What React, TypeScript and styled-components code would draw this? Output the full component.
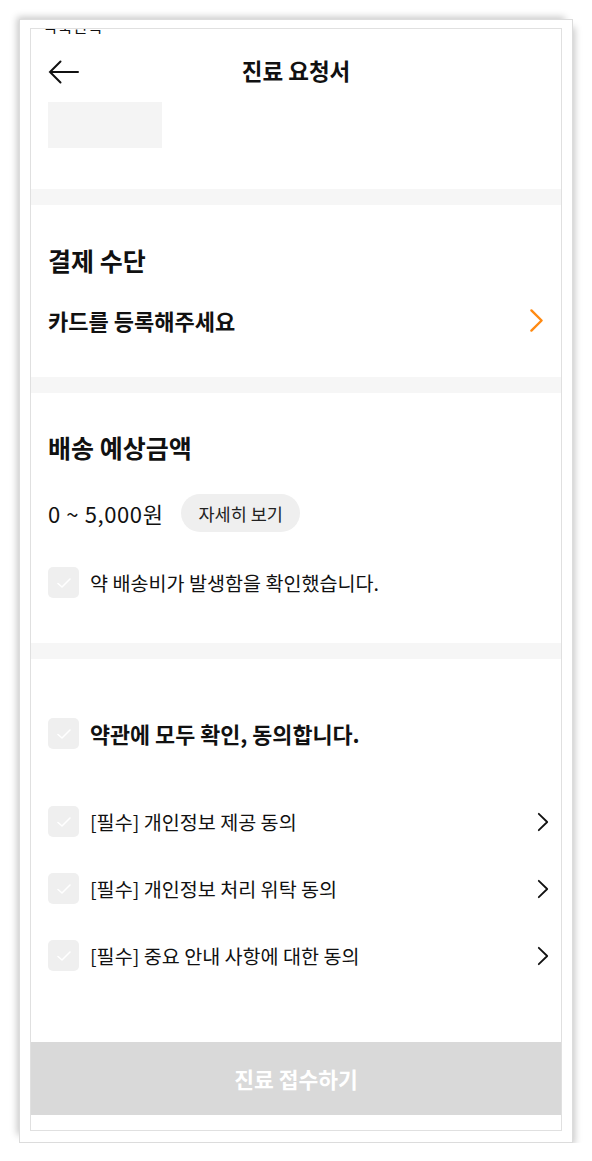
import React from 'react';
import styled, { createGlobalStyle } from 'styled-components';

const GlobalStyle = createGlobalStyle`
	body {
		margin: 0;
		background: #fff;
		font-family: 'Noto Sans CJK KR', 'Noto Sans', sans-serif;
		color: #111;
	}
`;

const Page = styled.div`
	padding: 19px 0 0 19px;
`;

const Frame = styled.div`
	width: 554px;
	height: 1124px;
	box-sizing: border-box;
	padding: 8px 10px 11px;
	background: #fff;
	border: 1px solid #dcdcdc;
	box-shadow: -5px -5px 7px -3px rgba(0, 0, 0, 0.22), 5px 5px 7px -3px rgba(0, 0, 0, 0.22);
`;

const Screen = styled.div`
	height: 1103px;
	box-sizing: border-box;
	border: 1px solid #e0e0e0;
	overflow: hidden;
	display: flex;
	flex-direction: column;
`;

const StatusClip = styled.div`
	height: 5px;
	overflow: hidden;
	padding-left: 12px;
	span {
		display: block;
		font-size: 16px;
		line-height: 16px;
		transform: translateY(-11px);
	}
`;

const TopSection = styled.section`
	padding: 0 17px 41px;
`;

const Header = styled.header`
	display: grid;
	grid-template-columns: 31px 1fr 31px;
	align-items: center;
	height: 24px;
	margin-top: 26px;
	h1 {
		margin: 0;
		padding-bottom: 4px;
		text-align: center;
		font-size: 22.5px;
		font-weight: 700;
		line-height: 20px;
	}
`;

const Placeholder = styled.div`
	width: 114px;
	height: 46px;
	margin-top: 18px;
	background: #f4f4f4;
`;

const Divider = styled.div`
	height: 16px;
	flex-shrink: 0;
	background: #f6f6f6;
`;

const Section = styled.section<{ $top: number; $bottom: number; $right?: number }>`
	padding: ${({ $top }) => $top}px ${({ $right }) => $right ?? 17}px ${({ $bottom }) => $bottom}px 17px;
`;

const SectionTitle = styled.h2`
	margin: 0;
	padding-bottom: 3px;
	font-size: 25px;
	font-weight: 700;
	line-height: 27px;
`;

const LinkRow = styled.div`
	display: flex;
	align-items: center;
	justify-content: space-between;
	height: 26px;
	margin-top: 30px;
	font-size: 22px;
	font-weight: 700;
	line-height: 22px;
`;

const PriceRow = styled.div`
	display: flex;
	align-items: center;
	gap: 18px;
	height: 38px;
	margin-top: 30px;
	font-size: 22px;
	letter-spacing: 0.6px;
`;

const Pill = styled.button`
	height: 38px;
	padding: 0 17px;
	border: none;
	border-radius: 19px;
	background: #efefef;
	font-family: inherit;
	font-size: 17.5px;
	letter-spacing: 0;
	color: #222;
`;

const CheckRow = styled.label<{ $gap: number }>`
	display: flex;
	align-items: center;
	gap: 11px;
	height: 31px;
	margin-top: ${({ $gap }) => $gap}px;
`;

const RowText = styled.span<{ $bold?: boolean }>`
	flex: 1;
	white-space: nowrap;
	font-size: ${({ $bold }) => ($bold ? 21.8 : 19.6)}px;
	font-weight: ${({ $bold }) => ($bold ? 700 : 400)};
`;

const Box = styled.span`
	display: flex;
	align-items: center;
	justify-content: center;
	flex: 0 0 31px;
	height: 31px;
	border-radius: 5px;
	background: #efefef;
`;

const Submit = styled.button`
	flex-shrink: 0;
	height: 73px;
	border: none;
	background: #d9d9d9;
	color: #fff;
	font-family: inherit;
	font-size: 21.5px;
	font-weight: 700;
`;

const BackIcon = () => (
	<svg width="31" height="24" viewBox="0 0 31 24" fill="none" stroke="#111" strokeWidth="2" strokeLinecap="round">
		<path d="M2 12 H30 M12.5 1.5 L2 12 L12.5 22.5" />
	</svg>
);

const Chevron = ({ color, w, h, sw }: { color: string; w: number; h: number; sw: number }) => (
	<svg width={w} height={h} viewBox={`0 0 ${w} ${h}`} fill="none" stroke={color} strokeWidth={sw} strokeLinecap="round" strokeLinejoin="round">
		<path d={`M${sw} ${sw} L${w - sw} ${h / 2} L${sw} ${h - sw}`} />
	</svg>
);

const Check = () => (
	<Box>
		<svg width="16" height="12" viewBox="0 0 16 12" fill="none" stroke="#fff" strokeWidth="1.6" strokeLinecap="round" strokeLinejoin="round">
			<path d="M2 6.5 L6 10 L14 2" />
		</svg>
	</Box>
);

const terms = ['[필수] 개인정보 제공 동의', '[필수] 개인정보 처리 위탁 동의', '[필수] 중요 안내 사항에 대한 동의'];

export default function App() {
	return (
		<Page>
			<GlobalStyle />
			<Frame>
				<Screen>
					<StatusClip>
						<span>약국선택</span>
					</StatusClip>
					<TopSection>
						<Header>
							<BackIcon />
							<h1>진료 요청서</h1>
						</Header>
						<Placeholder />
					</TopSection>
					<Divider />
					<Section $top={42} $bottom={44}>
						<SectionTitle>결제 수단</SectionTitle>
						<LinkRow>
							카드를 등록해주세요
							<Chevron color="#ff8a12" w={15} h={25} sw={2.4} />
						</LinkRow>
					</Section>
					<Divider />
					<Section $top={41} $bottom={45}>
						<SectionTitle>배송 예상금액</SectionTitle>
						<PriceRow>
							0 ~ 5,000원
							<Pill>자세히 보기</Pill>
						</PriceRow>
						<CheckRow $gap={35}>
							<Check />
							<RowText>약 배송비가 발생함을 확인했습니다.</RowText>
						</CheckRow>
					</Section>
					<Divider />
					<Section $top={59} $bottom={71} $right={12}>
						<CheckRow $gap={0}>
							<Check />
							<RowText $bold>약관에 모두 확인, 동의합니다.</RowText>
						</CheckRow>
						{terms.map((t, i) => (
							<CheckRow key={t} $gap={i === 0 ? 57 : 36}>
								<Check />
								<RowText>{t}</RowText>
								<Chevron color="#111" w={12} h={20} sw={1.8} />
							</CheckRow>
						))}
					</Section>
					<Submit>진료 접수하기</Submit>
				</Screen>
			</Frame>
		</Page>
	);
}
